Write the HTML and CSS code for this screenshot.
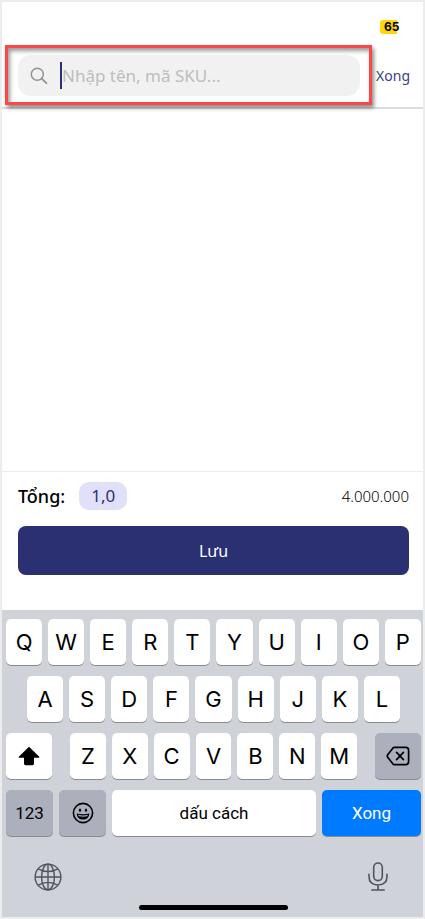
FILE: index.html
```html
<!DOCTYPE html>
<html lang="vi">
<head>
<meta charset="utf-8">
<meta name="viewport" content="width=device-width, initial-scale=1">
<title>Tìm kiếm sản phẩm</title>
<link rel="stylesheet" href="styles.css">
</head>
<body>
<div class="screen">
  <header class="header">
    <div class="status"><span class="battery">65</span></div>
    <div class="search-row">
      <div class="highlight">
        <label class="search">
          <svg class="search-icon" viewBox="0 0 18 18" fill="none" stroke="currentColor" stroke-width="1.4" stroke-linecap="round" aria-hidden="true"><circle cx="7.3" cy="7.3" r="6"/><path d="M11.7 11.7 16.4 16.2" stroke-width="1.8"/></svg>
          <span class="caret"></span>
          <input class="search-input" type="text" placeholder="Nhập tên, mã SKU..." aria-label="Nhập tên, mã SKU">
        </label>
      </div>
      <a class="done" href="#">Xong</a>
    </div>
  </header>
  <main class="results"></main>
  <section class="summary">
    <div class="totals">
      <span class="total-label">Tổng:</span>
      <span class="quantity">1,0</span>
      <span class="amount">4.000.000</span>
    </div>
    <button class="save" type="button">Lưu</button>
  </section>
  <section class="keyboard" aria-label="Bàn phím">
    <div class="keys">
      <button class="key">Q</button><button class="key">W</button><button class="key">E</button><button class="key">R</button><button class="key">T</button><button class="key">Y</button><button class="key">U</button><button class="key">I</button><button class="key">O</button><button class="key">P</button>
    </div>
    <div class="keys keys-middle">
      <button class="key">A</button><button class="key">S</button><button class="key">D</button><button class="key">F</button><button class="key">G</button><button class="key">H</button><button class="key">J</button><button class="key">K</button><button class="key">L</button>
    </div>
    <div class="keys keys-lower">
      <button class="key" aria-label="Shift"><svg width="22" height="20" viewBox="0 0 22 20" aria-hidden="true"><path d="M11 .8 21 10.4Q22 11.8 20.3 11.8H16V17.6Q16 19.2 14.4 19.2H7.6Q6 19.2 6 17.6V11.8H1.7Q0 11.8 1 10.4Z" fill="currentColor"/></svg></button>
      <div class="keys">
        <button class="key">Z</button><button class="key">X</button><button class="key">C</button><button class="key">V</button><button class="key">B</button><button class="key">N</button><button class="key">M</button>
      </div>
      <button class="key key-gray" aria-label="Xóa"><svg width="24" height="20" viewBox="0 0 24 20" fill="none" stroke="currentColor" stroke-width="1.7" stroke-linecap="round" stroke-linejoin="round" aria-hidden="true"><path d="M8.6 1.4H19.8Q22.6 1.4 22.6 4.2V15.8Q22.6 18.6 19.8 18.6H8.6Q7.6 18.6 6.8 17.8L1.7 11.2Q.8 10 1.7 8.8L6.8 2.2Q7.6 1.4 8.6 1.4ZM10.6 6.4 17.4 13.6M17.4 6.4 10.6 13.6"/></svg></button>
    </div>
    <div class="keys keys-bottom">
      <button class="key key-gray key-text">123</button>
      <button class="key key-gray" aria-label="Biểu tượng cảm xúc"><svg width="22" height="22" viewBox="0 0 22 22" aria-hidden="true"><circle cx="11" cy="11" r="9.6" fill="none" stroke="currentColor" stroke-width="1.6"/><ellipse cx="8" cy="8.2" rx="1.1" ry="1.6" fill="currentColor"/><ellipse cx="14" cy="8.2" rx="1.1" ry="1.6" fill="currentColor"/><path d="M4.6 11.4Q11 13 17.4 11.4Q17 17.4 11 17.4T4.6 11.4Z" fill="currentColor"/><path d="M6.2 12.8Q11 14 15.8 12.8L15.2 14.3Q11 15.2 6.8 14.3Z" fill="#abb0bc"/></svg></button>
      <button class="key key-text">dấu cách</button>
      <button class="key key-blue key-text">Xong</button>
    </div>
    <div class="tools">
      <button class="tool" aria-label="Đổi bàn phím"><svg width="28" height="28" viewBox="0 0 28 28" fill="none" stroke="currentColor" stroke-width="1.4" aria-hidden="true"><circle cx="14" cy="14" r="12.9"/><ellipse cx="14" cy="14" rx="6.4" ry="12.9"/><path d="M14 1V27M1 14H27M4.2 5.8Q14 11.4 23.8 5.8M4.2 22.2Q14 16.6 23.8 22.2"/></svg></button>
      <button class="tool" aria-label="Nhập bằng giọng nói"><svg width="20" height="30" viewBox="0 0 20 30" fill="none" stroke="currentColor" stroke-width="1.6" stroke-linecap="round" aria-hidden="true"><rect x="5.7" y="1" width="8.6" height="17.6" rx="4.3"/><path d="M1 12.2V14.6Q1 23 10 23T19 14.6V12.2M10 23V28M3.8 28H16.2"/></svg></button>
    </div>
    <div class="home-bar"></div>
  </section>
</div>
</body>
</html>
```
FILE: styles.css
```css
* { box-sizing: border-box; }

body {
  margin: 0;
  background: #fff;
  color: #000;
  font-family: "Noto Sans", "Open Sans", sans-serif;
}

button, input { font: inherit; color: inherit; border: 0; padding: 0; }
svg { display: block; }

.screen {
  min-height: 100vh;
  display: flex;
  flex-direction: column;
  border: 2px solid #ececec;
}

.header { border-bottom: 2px solid #dcdcdc; }

.status {
  display: flex;
  justify-content: flex-end;
  height: 43px;
  padding: 18px 22px 0 0;
}

.battery {
  width: 21px;
  height: 14px;
  padding-left: 4px;
  border-radius: 3px;
  background: linear-gradient(#ffd60a, #ffd60a) no-repeat 0 0 / 17px 100%;
  font: bold 12px/14px Inter, sans-serif;
}

.search-row {
  display: flex;
  align-items: center;
  gap: 4px;
  padding: 0 13px 2px 3px;
}

.highlight {
  flex: 1;
  padding: 7px 9px 6px 10px;
  border: 3px solid #fd4646;
  box-shadow: 2px 3px 4px rgba(0, 0, 0, .45), inset 2px 3px 4px rgba(0, 0, 0, .4);
}

.search {
  display: flex;
  align-items: center;
  height: 41px;
  padding: 0 12px;
  border-radius: 13px;
  background: #f1f1f1;
}

.search-icon { width: 18px; height: 18px; color: #929292; }

.caret {
  width: 2px;
  height: 27px;
  margin-left: 12px;
  background: #2b3075;
}

.search-input {
  flex: 1;
  min-width: 0;
  background: none;
  outline: 0;
  font-size: 17px;
}

.search-input::placeholder { color: #bdbdbd; opacity: 1; }

.done {
  color: #3b3f7d;
  font-size: 14px;
  text-decoration: none;
}

.results { flex: 1; }

.summary {
  padding: 10px 14px 35px 16px;
  border-top: 1px solid #ececec;
}

.totals {
  display: flex;
  align-items: center;
  gap: 14px;
  margin-bottom: 16px;
}

.total-label { font-size: 18px; line-height: 28px; font-weight: 500; }

.quantity {
  padding: 0 12px;
  border-radius: 10px;
  background: #e0e0fa;
  color: #2b3075;
  font-size: 17px;
  line-height: 28px;
}

.amount { margin-left: auto; font-size: 15px; font-weight: 300; }

.save {
  display: block;
  width: 100%;
  height: 49px;
  border-radius: 8px;
  background: #2b3072;
  color: #fff;
  font-size: 16px;
}

.keyboard {
  display: flex;
  flex-direction: column;
  gap: 11px;
  padding: 9px 2px 7px 4px;
  background: #cfd2d8;
  font-family: Inter, Roboto, sans-serif;
}

.keys { display: flex; gap: 6px; }
.keys-middle { padding: 0 21px; }

.key {
  flex: 1;
  min-width: 0;
  height: 46px;
  display: flex;
  align-items: center;
  justify-content: center;
  border-radius: 5px;
  background: #fff;
  box-shadow: 0 1px 0 #898b90;
  font-size: 22px;
}

.keys-lower { display: grid; grid-template-columns: 46fr 288fr 46fr; gap: 18px; }
.keys-bottom { display: grid; grid-template-columns: 47fr 47fr 204fr 99fr; }
.key-gray { background: #abb0bc; }
.key-blue { background: #007aff; color: #fff; }
.key-text { font: 17px Roboto, sans-serif; }

.tools {
  display: flex;
  justify-content: space-between;
  align-items: center;
  padding: 15px 33px 0 28px;
}

.tool { background: none; color: #50545b; }

.home-bar {
  width: 36%;
  height: 5px;
  margin: 2px auto 0;
  border-radius: 3px;
  background: #000;
}
```
